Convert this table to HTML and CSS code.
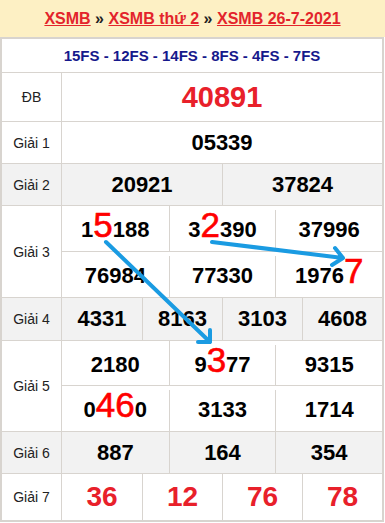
FILE: index.html
```html
<!DOCTYPE html>
<html lang="vi">
<head>
<meta charset="utf-8">
<title>XSMB 26-7-2021</title>
<link rel="stylesheet" href="styles.css">
</head>
<body>
<div class="page">
  <div class="title">
    <span><a href="#">XSMB</a> » <a href="#">XSMB thứ 2</a> » <a href="#">XSMB 26-7-2021</a></span>
  </div>
  <div class="board">
    <div class="fs">15FS - 12FS - 14FS - 8FS - 4FS - 7FS</div>

    <div class="row row-db">
      <div class="label">ĐB</div>
      <div class="cells cols-1"><div class="cell db"><span>40891</span></div></div>
    </div>

    <div class="row row-std">
      <div class="label">Giải 1</div>
      <div class="cells cols-1"><div class="cell"><span>05339</span></div></div>
    </div>

    <div class="row row-std alt">
      <div class="label">Giải 2</div>
      <div class="cells cols-2"><div class="cell"><span>20921</span></div><div class="cell"><span>37824</span></div></div>
    </div>

    <div class="row row-g3">
      <div class="label">Giải 3</div>
      <div class="stack">
        <div class="cells cols-3 sub">
          <div class="cell"><span>1<span class="hl">5</span>188</span></div>
          <div class="cell"><span>3<span class="hl">2</span>390</span></div>
          <div class="cell gap"><span>37996</span></div>
        </div>
        <div class="cells cols-3 sub">
          <div class="cell"><span>76984</span></div>
          <div class="cell gap"><span>77330</span></div>
          <div class="cell gap"><span>1976<span class="hl">7</span></span></div>
        </div>
      </div>
    </div>

    <div class="row row-g4 alt">
      <div class="label">Giải 4</div>
      <div class="cells cols-4"><div class="cell"><span>4331</span></div><div class="cell"><span>8163</span></div><div class="cell"><span>3103</span></div><div class="cell"><span>4608</span></div></div>
    </div>

    <div class="row row-g5">
      <div class="label">Giải 5</div>
      <div class="stack stack-g5">
        <div class="cells cols-3 sub">
          <div class="cell"><span>2180</span></div>
          <div class="cell"><span>9<span class="hl">3</span>77</span></div>
          <div class="cell gap"><span>9315</span></div>
        </div>
        <div class="cells cols-3 sub">
          <div class="cell"><span>0<span class="hl">46</span>0</span></div>
          <div class="cell gap"><span>3133</span></div>
          <div class="cell gap"><span>1714</span></div>
        </div>
      </div>
    </div>

    <div class="row row-std alt">
      <div class="label">Giải 6</div>
      <div class="cells cols-3"><div class="cell"><span>887</span></div><div class="cell"><span>164</span></div><div class="cell"><span>354</span></div></div>
    </div>

    <div class="row row-g7">
      <div class="label">Giải 7</div>
      <div class="cells cols-4"><div class="cell g7"><span>36</span></div><div class="cell g7"><span>12</span></div><div class="cell g7"><span>76</span></div><div class="cell g7"><span>78</span></div></div>
    </div>
  </div>

  <svg class="arrows" width="385" height="523" viewBox="0 0 385 523" aria-hidden="true">
    <g fill="none" stroke="#1a9be2" stroke-width="4" stroke-linecap="round" stroke-linejoin="round">
      <path d="M106 242 L210 342 M210 342 V330 M210 342 H198"/>
      <path d="M212 242 L343 258 M343 258 L335 248 M343 258 L332 265"/>
    </g>
  </svg>
</div>
</body>
</html>
```

FILE: styles.css
```css
* { box-sizing: border-box; }

html, body {
  margin: 0;
  padding: 0;
  background: #ffffff;
}

body {
  font-family: "Liberation Sans", Arial, sans-serif;
  color: #000;
}

.page {
  position: relative;
  width: 385px;
}

.title {
  height: 37px;
  background: #fdf0c4;
  display: flex;
  align-items: center;
  justify-content: center;
  font-size: 16px;
  font-weight: bold;
  color: #222;
}

.title a {
  color: #e3242b;
  text-decoration: underline;
}

.board {
  width: 384px;
  border: 2px solid #d8d4cf;
}

.fs {
  height: 33px;
  display: flex;
  align-items: center;
  justify-content: center;
  font-size: 15px;
  font-weight: bold;
  color: #16198c;
}

.row {
  display: grid;
  grid-template-columns: 60px 1fr;
  border-top: 1px solid #d8d4cf;
}

.row-db { height: 49px; }
.row-std { height: 42px; }
.row-g3 { height: 92px; }
.row-g4 { height: 43px; }
.row-g5 { height: 91px; }
.row-g7 { height: 47px; }

.alt { background: #f2f2f2; }

.label {
  border-right: 1px solid #d8d4cf;
  display: flex;
  align-items: center;
  justify-content: center;
  font-size: 14px;
  color: #222;
}

.cells { display: grid; }
.cols-1 { grid-template-columns: 1fr; }
.cols-2 { grid-template-columns: 1fr 1fr; }
.cols-3 { grid-template-columns: 1fr 1fr 1fr; }
.cols-4 { grid-template-columns: 1fr 1fr 1fr 1fr; }

.cell {
  display: flex;
  align-items: center;
  justify-content: center;
  font-size: 22px;
  font-weight: bold;
  border-left: 1px solid #d8d4cf;
  white-space: nowrap;
}

.cell:first-child { border-left: none; }

.cell.gap {
  border-left: none;
  padding-left: 1px;
  background: linear-gradient(#d8d4cf, #d8d4cf) 0 4px / 1px 100% no-repeat;
}

.stack {
  display: grid;
  grid-template-rows: 45px 46px;
}

.stack-g5 { grid-template-rows: 44px 46px; }

.sub + .sub { border-top: 1px solid #d8d4cf; }

.sub .cell { padding-top: 3px; }

.hl {
  font-size: 35px;
  font-weight: normal;
  color: #ff0000;
  line-height: 0;
  -webkit-text-stroke: 0.6px #ff0000;
}

.db {
  font-size: 29px;
  color: #e8202a;
}

.g7 {
  font-size: 28px;
  color: #e8202a;
}

.arrows {
  position: absolute;
  left: 0;
  top: 0;
  pointer-events: none;
}
```
